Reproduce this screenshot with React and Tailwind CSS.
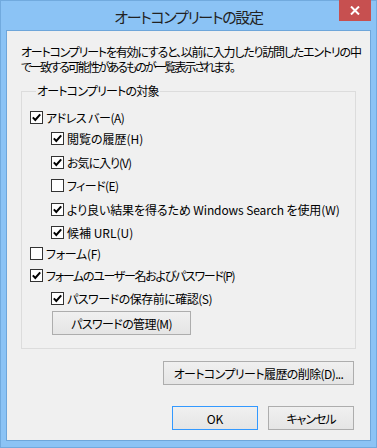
import React from "react";

const FONT = "font-['Noto_Sans_CJK_JP',sans-serif] [font-feature-settings:'palt']";

function Box({ checked }) {
  return (
    <svg width="13" height="13" viewBox="0 0 13 13" className="shrink-0">
      <rect x="0.5" y="0.5" width="12" height="12" fill="#ffffff" stroke="#333333" />
      {checked && (
        <path d="M2.8 6.4 L5.3 9 L10.2 3.4" stroke="#000000" strokeWidth="2" fill="none" />
      )}
    </svg>
  );
}

function Row({ checked, label, cls, tcls }) {
  return (
    <div className={"flex h-[21px] items-center gap-[3px] text-[12px] leading-[15px] text-black whitespace-nowrap " + cls}>
      <Box checked={checked} />
      <span className={tcls}>{label}</span>
    </div>
  );
}

function Btn({ children, cls, tcls }) {
  return (
    <div
      className={
        "flex h-[24px] items-center justify-center border text-[12px] leading-[15px] text-black bg-gradient-to-b from-[#f0f0f0] to-[#e5e5e5] whitespace-nowrap " +
        cls
      }
    >
      <span className={tcls}>{children}</span>
    </div>
  );
}

export default function App() {
  return (
    <div className={"w-[377px] h-[448px] bg-[#8bc3f5] border border-[#71aade] flex flex-col " + FONT}>
      <div className="relative h-[29px] flex items-center justify-center">
        <span className="text-[15px] leading-[18px] text-[#222222] mt-[2px] tracking-[-1.3px]">オートコンプリートの設定</span>
        <div className="absolute right-[5px] top-[-1px] w-[32px] h-[21px] bg-[#c75050] flex items-center justify-center">
          <svg width="10" height="9" viewBox="0 0 10 9">
            <path d="M1 0.5 L9 8.5 M9 0.5 L1 8.5" stroke="#ffffff" strokeWidth="2" />
          </svg>
        </div>
      </div>
      <div className="mx-[5px] h-[411px] border border-[#6ea6da] bg-[#f0f0f0] flex flex-col">
        <div className="pl-[14px] pt-[13px] text-[12px] leading-[15px] text-black whitespace-nowrap">
          <div className="tracking-[-1.2px]">オートコンプリートを有効にすると、以前に入力したり訪問したエントリの中</div>
          <div className="tracking-[-2px]">で一致する可能性があるものが一覧表示されます。</div>
        </div>
        <fieldset className="mx-[14px] mt-[9px] border border-[#dcdcdc] pl-[8px] pb-[13px]">
          <legend className="ml-[6px] px-[1px] text-[12px] leading-[16px] text-black tracking-[-0.8px]">オートコンプリートの対象</legend>
          <div className="flex flex-col mt-[8px]">
            <Row checked label="アドレス バー(A)" cls="" tcls="tracking-[-0.5px]" />
            <Row checked label="閲覧の履歴(H)" cls="ml-[21px] mt-[0px]" tcls="" />
            <Row checked label="お気に入り(V)" cls="ml-[21px] mt-[3px]" tcls="tracking-[-1px]" />
            <Row checked={false} label="フィード(E)" cls="ml-[21px] mt-[2px]" tcls="tracking-[-0.6px]" />
            <Row checked label="より良い結果を得るため Windows Search を使用(W)" cls="ml-[21px] mt-[3px]" tcls="tracking-[-0.1px]" />
            <Row checked label="候補 URL(U)" cls="ml-[21px] mt-[2px]" tcls="" />
            <Row checked={false} label="フォーム(F)" cls="" tcls="tracking-[-0.3px]" />
            <Row checked label="フォームのユーザー名およびパスワード(P)" cls="mt-[1px]" tcls="tracking-[-1.3px]" />
            <Row checked label="パスワードの保存前に確認(S)" cls="ml-[21px] mt-[2px]" tcls="tracking-[-0.5px]" />
            <Btn cls="ml-[22px] mt-[2px] w-[139px] border-[#adadad]" tcls="tracking-[-0.6px]">パスワードの管理(M)</Btn>
          </div>
        </fieldset>
        <div className="flex justify-end pr-[16px] mt-[12px]">
          <Btn cls="w-[191px] border-[#adadad]" tcls="tracking-[-0.6px]">オートコンプリート履歴の削除(D)...</Btn>
        </div>
        <div className="flex justify-end gap-[10px] pr-[16px] mt-[21px]">
          <Btn cls="w-[86px] border-[#3399ff]" tcls="">OK</Btn>
          <Btn cls="w-[86px] border-[#adadad]" tcls="tracking-[-1px]">キャンセル</Btn>
        </div>
      </div>
    </div>
  );
}
